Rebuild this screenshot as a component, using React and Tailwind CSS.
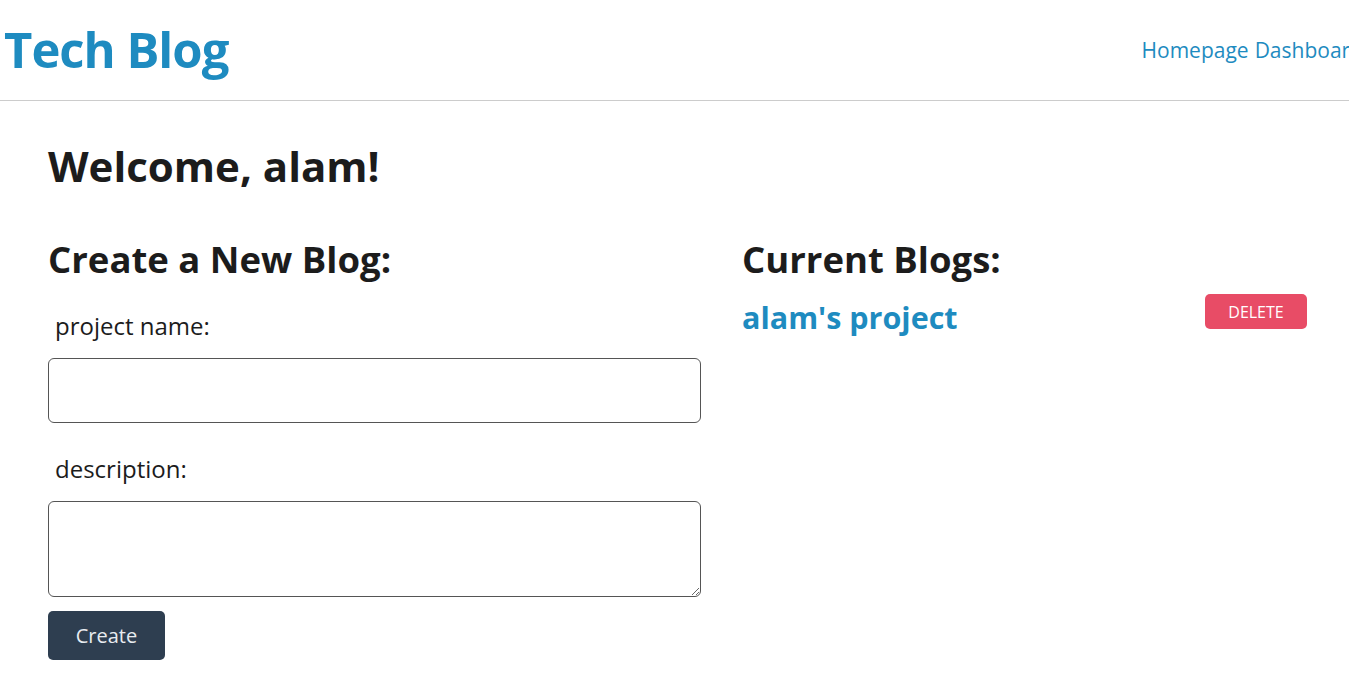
export default function App() {
  return (
    <div className="min-h-screen bg-white text-[#1c1c1c] overflow-hidden" style={{ fontFamily: '"Open Sans", "Noto Sans", sans-serif' }}>
      <header className="h-[101px] border-b border-[#cccccc] flex items-center justify-between whitespace-nowrap">
        <h1 className="pl-[4px] text-[49px] font-bold text-[#1e8bc0] tracking-[-1px] leading-none -mt-[2px]">Tech Blog</h1>
        <nav className="flex gap-[6px] text-[21px] text-[#1e8bc0] -mr-[14px] mt-[2px]">
          <a>Homepage</a>
          <a>Dashboard</a>
        </nav>
      </header>

      <main className="px-[48px] pt-[39px]">
        <h2 className="text-[42px] font-bold leading-tight">Welcome, alam!</h2>

        <div className="flex gap-[41px] mt-[44px]">
          <section className="w-[653px]">
            <h3 className="text-[36.5px] font-bold leading-tight">Create a New Blog:</h3>
            <form className="flex flex-col">
              <label className="mt-[26px] pl-[7px] text-[24px]">project name:</label>
              <input className="mt-[14px] h-[65px] border border-[#555] rounded-[6px]" />
              <label className="mt-[28px] pl-[7px] text-[24px]">description:</label>
              <textarea className="mt-[14px] h-[96px] border border-[#555] rounded-[6px] resize-y" />
              <button type="button" className="mt-[14px] w-[117px] h-[49px] rounded-[5px] bg-[#2e3e50] text-[#e8ecf0] text-[20px]">Create</button>
            </form>
          </section>

          <section className="flex-1">
            <h3 className="text-[36.5px] font-bold leading-tight">Current Blogs:</h3>
            <div className="flex items-center justify-between mt-[16px] -mr-[6px]">
              <a className="text-[30.5px] font-bold text-[#1e8bc0] leading-tight">alam's project</a>
              <button type="button" className="w-[102px] h-[35px] rounded-[5px] bg-[#e84c66] text-white text-[16px] uppercase -mt-[11px]">Delete</button>
            </div>
          </section>
        </div>
      </main>
    </div>
  );
}
